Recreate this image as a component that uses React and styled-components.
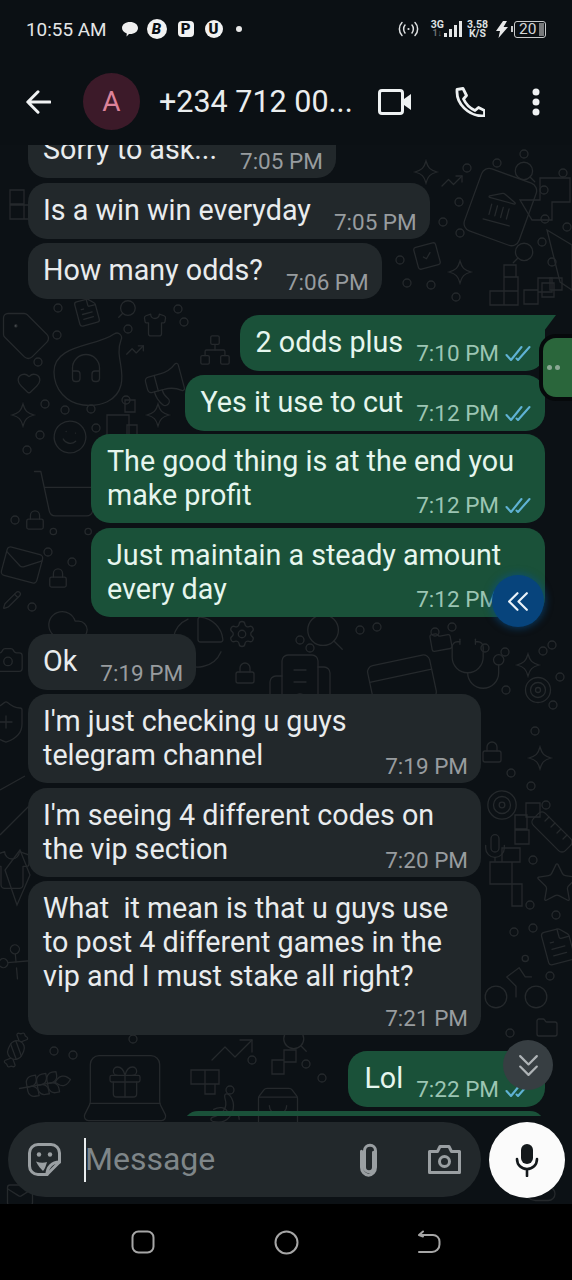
import React from "react";
import styled, { createGlobalStyle } from "styled-components";
import {
  Landmark, SquareCheck, Search, Tag, Headphones, Megaphone, Heart, Smile, ShoppingCart, Lock, Mail,
  Network, Cloud, Shirt, FileText, ChartPie, Settings, Building2, CreditCard, Stethoscope, Target, Ruler,
  Mic, Star, Bike, Folder, ShieldPlus, Scissors, Gift, Laptop, TrendingUp, ShoppingBag, Banana, Candy,
  Pencil, Camera, Wheat,
} from "lucide-react";

const Global = createGlobalStyle`
  html, body { margin: 0; padding: 0; background: #000; }
  * { box-sizing: border-box; }
`;

const Page = styled.div`
  width: 572px; height: 1280px; display: flex; flex-direction: column; overflow: hidden;
  font-family: Roboto, "Noto Sans", sans-serif; background: #0b1014; color: #e9edef;
`;
const Header = styled.header`
  height: 145px; flex: none; background: #0b1014; display: flex; flex-direction: column;
`;
const StatusBar = styled.div`
  height: 58px; display: flex; align-items: center; justify-content: space-between; padding: 0 26px;
`;
const StatusGroup = styled.div`display: flex; align-items: center; margin-left: ${p => p.$ml || 0}px;`;
const Clock = styled.span`font-size: 18.9px; color: #e4e6e7; margin-right: 14px;`;
const NoteBadge = styled.span`
  width: ${p => p.$size || 20}px; height: ${p => p.$size || 20}px; border-radius: ${p => p.$square ? "4px" : "50%"};
  background: #f2f2f2; color: #0b1014; display: flex; align-items: center; justify-content: center;
  font-size: 15px; font-weight: 900; font-style: ${p => p.$italic ? "italic" : "normal"};
  margin-left: ${p => p.$ml || 0}px;
`;
const NoteDot = styled.span`width: 6px; height: 6px; border-radius: 50%; background: #e8e8e8; margin-left: 13px;`;
const NetStack = styled.span`
  display: flex; flex-direction: column; align-items: center; line-height: 9px; font-size: 10.5px; font-weight: 700; color: #dfe1e2;
  margin-left: ${p => p.$ml || 0}px;
`;
const NetDim = styled.span`color: #6c7072; font-size: 9px;`;
const Battery = styled.span`
  width: 32px; height: 17px; border: 1.5px solid #c9cbcc; border-radius: 3px; margin-left: 6px; position: relative;
  display: flex; align-items: center; padding-left: 4px; font-size: 15.5px; color: #d4d6d7;
  &::before { content: ""; position: absolute; left: -4px; top: 4px; width: 2px; height: 6px; background: #c9cbcc; }
  &::after { content: ""; position: absolute; right: 1px; top: 1px; bottom: 1px; width: 5px; background: #77797b; }
`;
const AppBar = styled.div`height: 87px; display: flex; align-items: center; padding: 0 0 0 26px;`;
const IconSlot = styled.span`
  display: flex; align-items: center; justify-content: center; flex: none;
  width: ${p => p.$w}px; margin-left: ${p => p.$ml || 0}px; color: #eef1f2;
`;
const Avatar = styled.div`
  width: 57px; height: 57px; border-radius: 50%; background: #3c1a29; color: #dc8299; flex: none; margin-left: 32px;
  display: flex; align-items: center; justify-content: center; font-size: 28px;
`;
const Title = styled.div`font-size: 30.5px; color: #eaedee; margin-left: 19px; width: 194px; white-space: nowrap;`;

const Chat = styled.main`
  flex: 1; min-height: 0; position: relative; display: flex; flex-direction: column; background: #0c1115;
`;
const Wallpaper = styled.svg`position: absolute; inset: 0; width: 100%; height: 100%;`;
const Messages = styled.section`
  position: relative; flex: 1; min-height: 0; overflow: hidden; display: flex; flex-direction: column;
`;
const Bubble = styled.div`
  flex: none; position: relative;
  align-self: ${p => p.$out ? "flex-end" : "flex-start"};
  margin: ${p => p.$top}px ${p => p.$out ? "27px" : "0"} 0 ${p => p.$out ? "0" : "28px"};
  width: ${p => p.$width ? p.$width + "px" : "auto"};
  background: ${p => p.$out ? "#1a5139" : "#22282b"};
  color: ${p => p.$out ? "#e6f6ee" : "#e9ecee"};
  border-radius: 19px;
  border-top-right-radius: ${p => p.$tail ? "0" : "19px"};
  padding: 10px ${p => p.$out ? "14px" : "13px"} 0 ${p => p.$out ? "16px" : "15px"};
  ${p => p.$tail && `&::after { content: ""; position: absolute; top: 0; right: -11px; width: 12px; height: 16px; background: #1a5139; clip-path: polygon(0 0, 100% 0, 0 100%); }`}
`;
const InlineRow = styled.div`display: flex; align-items: flex-end; gap: ${p => p.$out ? 13 : 23}px; height: 46px;`;
const Text = styled.div`font-size: 28.7px; line-height: 34px;`;
const Line = styled.div`width: fit-content; white-space: pre;`;
const InlineText = styled(Text)`white-space: nowrap; padding-bottom: 12px;`;
const Meta = styled.div`
  display: flex; align-items: center; justify-content: flex-end; gap: 6px; height: 24px; flex: none; width: fit-content;
  margin: ${p => p.$mt || 0}px 0 ${p => p.$out ? 6 : 5}px auto;
  font-size: 22.5px; color: ${p => p.$out ? "#9cc5b3" : "#989c9f"}; white-space: nowrap;
`;
const PeekBubble = styled.div`
  flex: none; align-self: flex-end; width: 362px; height: 30px; margin: 4px 27px 0 0; background: #1a5139; border-radius: 19px;
`;
const SwipeTab = styled.div`
  position: absolute; right: -14px; top: 193px; width: 43px; height: 59px; background: #2a663b; border-radius: 13px;
  box-shadow: 0 0 0 4px #06090b; display: flex; align-items: center; gap: 3px; padding-left: 4px;
`;
const SwipeDot = styled.span`width: 5px; height: 5px; border-radius: 50%; background: #8aa894;`;
const Fab = styled.div`
  position: absolute; border-radius: 50%; display: flex; align-items: center; justify-content: center;
  left: ${p => p.$x}px; top: ${p => p.$y}px; width: ${p => p.$d}px; height: ${p => p.$d}px;
  background: ${p => p.$bg}; box-shadow: ${p => p.$glow || "none"};
`;
const ComposerRow = styled.div`
  position: relative; flex: none; height: 88px; padding: 6px 7px 7px 8px; display: flex; gap: 8px;
`;
const Composer = styled.div`
  flex: 1; height: 75px; border-radius: 38px; background: #22282b; display: flex; align-items: center; padding: 0 20px; color: #9a9fa2;
`;
const Caret = styled.span`width: 2px; height: 44px; background: #e9edef; margin-left: 23px; flex: none;`;
const Placeholder = styled.span`font-size: 32px; color: #7f8689; flex: 1; margin-top: -2px; margin-left: -1px;`;
const MicButton = styled.div`
  width: 76px; height: 76px; border-radius: 50%; background: #fbfbfb; flex: none; display: flex; align-items: center; justify-content: center;
`;
const NavBar = styled.nav`
  height: 76px; flex: none; background: #000; display: grid; grid-template-columns: repeat(3, 143px);
  justify-content: center; justify-items: center; align-items: center;
`;

const Ticks = () => (
  <svg width="26" height="17" viewBox="0 0 26 17" fill="none" stroke="#5fb2d4" strokeWidth="2.1" strokeLinecap="round" strokeLinejoin="round">
    <path d="M1.5 10l4.5 5L16.5 2" /><path d="M11.5 13.5l1.5 1.5L24.5 2" />
  </svg>
);
const Msg = ({ out, top, lines, time, width, mt, tail, ticks = out }) => {
  const meta = (
    <Meta $out={out} $mt={mt}>
      <span>{time}</span>{ticks && <Ticks />}
    </Meta>
  );
  return (
    <Bubble $out={out} $top={top} $width={width} $tail={tail}>
      {width
        ? <><Text>{lines.map((l, i) => <Line key={i}>{l}</Line>)}</Text>{meta}</>
        : <InlineRow $out={out}><InlineText>{lines[0]}</InlineText>{meta}</InlineRow>}
    </Bubble>
  );
};

const STAR = "M0 -11C2 -4 4 -2 11 0C4 2 2 4 0 11C-2 4 -4 2 -11 0C-4 -2 -2 -4 0 -11Z";
const doodles = [
  [Landmark, 500, 208, 36, 15], [SquareCheck, 427, 256, 30, -15], [Search, 525, 172, 26, 0], [Search, 523, 253, 26, 90],
  [TrendingUp, 452, 181, 24, 0], [Tag, 26, 336, 54, 0], [Headphones, 86, 368, 36, 0], [Megaphone, 165, 385, 48, -15],
  [Heart, 29, 383, 26, 0], [Smile, 70, 437, 38, 10], [ShoppingCart, 66, 503, 76, 0], [Lock, 35, 520, 22, 0], [Lock, 58, 578, 22, 0],
  [Mail, 22, 565, 44, 15], [Network, 215, 350, 34, 0], [Cloud, 68, 625, 46, 0], [Shirt, 155, 325, 26, 0], [FileText, 87, 312, 30, -15],
  [Search, 127, 309, 22, 90], [TrendingUp, 135, 350, 20, 0], [ChartPie, 198, 642, 60, 0], [Settings, 242, 634, 30, 0], [Search, 325, 632, 46, 0],
  [Building2, 300, 682, 72, 0], [Lock, 245, 673, 24, 0], [CreditCard, 402, 682, 76, -12], [Stethoscope, 478, 665, 62, 0], [Target, 538, 690, 30, 0],
  [Lock, 492, 752, 24, 0], [Target, 502, 805, 34, 0], [Ruler, 552, 832, 48, 0], [Mic, 495, 848, 32, 0], [Star, 557, 883, 46, 0],
  [FileText, 558, 946, 40, -15], [Bike, 516, 980, 74, 0], [Folder, 547, 1028, 24, 0], [ShieldPlus, 6, 722, 48, 0],
  [Scissors, 16, 962, 36, 40], [Gift, 125, 1082, 40, 0], [Laptop, 125, 1086, 104, 0], [Candy, 16, 1050, 36, -20], [Wheat, 45, 1084, 44, 35],
  [TrendingUp, 232, 1050, 48, 0], [ShoppingBag, 278, 1110, 52, 0], [Banana, 225, 1108, 34, 0], [Pencil, 12, 600, 20, 0],
  [Camera, 8, 660, 34, 0], [Search, 295, 1040, 30, 0], [Shirt, 12, 870, 44, 0], [Folder, 441, 642, 24, -10],
  [Cloud, 540, 1190, 36, 0], [Mail, 20, 1195, 30, 0],
];
const stars = [[426, 172], [460, 272], [23, 415], [158, 415], [528, 665], [540, 758]];
const blocks = [
  "M490 291h14v14h-14zM504 291h14v14h-14zM504 277h14v14h-14zM504 265h12v12h-12z", "M542 283h12v14h-12zM550 278h12v12h-12z",
  "M524 290h14v14h-14zM538 278h14v14h-14z", "M520 200h20v-22h30v24h-18v18h-20z", "M107 415h22v22h-22zM125 400h10v12h-10zM127 425h10v12h-10z",
  "M10 205h14v14h-14zM10 190h14v14h-14zM24 205h14v14h-14z", "M515 815h12v14h-12zM526 803h14v14h-14zM515 830h14v14h-14z",
  "M490 862h22v22h-22zM512 862h-10v-14h18v14zM512 884h10v22h-10z", "M191 1070h14v14h-14zM205 1084h10v10h-10zM205 1070h14v14h-14z",
  "M272 1060h12v14h-12zM284 1050h12v12h-12z",
];
const circles = [
  [467, 168], [497, 163], [524, 154], [563, 173], [544, 190], [459, 202], [443, 222], [460, 233], [545, 219], [542, 242], [567, 227], [552, 262],
  [400, 260], [407, 283], [431, 285], [456, 297], [58, 308], [57, 335], [178, 309], [128, 329], [184, 322], [38, 362], [126, 400], [45, 404], [65, 410], [91, 409], [96, 428], [40, 435],
  [27, 450], [15, 520], [48, 552], [72, 562], [32, 607], [300, 640], [310, 648], [377, 627], [360, 630], [435, 632], [452, 627], [485, 648], [543, 651], [505, 652], [552, 645], [560, 677], [506, 690],
  [535, 731], [553, 705], [511, 773], [531, 786], [546, 805], [533, 860], [530, 905], [556, 915], [514, 932], [533, 928], [550, 976], [510, 1033], [54, 1051], [73, 1055], [133, 1039], [230, 1090], [322, 1078], [252, 1060], [306, 1064],
];

const Doodles = () => (
  <Wallpaper viewBox="0 145 572 1059" aria-hidden="true" fill="none" stroke="#25292c" strokeWidth="1.3">
    {doodles.map(([Icon, x, y, s, r], i) => (
      <g key={i} transform={`translate(${x} ${y}) rotate(${r})`}>
        <Icon x={-s / 2} y={-s / 2} size={s} color="#25292c" absoluteStrokeWidth strokeWidth={1.3} />
      </g>
    ))}
    <rect x="471" y="174" width="58" height="66" rx="8" transform="rotate(20 500 208)" />
    <path d="M54 372c0-28 42-25 60-38 5-3 9 2 7 6-6 16 4 28 0 45-4 16-20 22-38 20-16-2-29-15-29-33z" />
    {stars.map(([x, y], i) => <path key={i} d={STAR} transform={`translate(${x} ${y})`} />)}
    {blocks.map((d, i) => <path key={i} d={d} />)}
    {circles.map(([x, y], i) => <circle key={i} cx={x} cy={y} r="4" />)}
    <path d="M547 230l25 15v45l-12-8z" />
    <path d="M20 850l-15 20 12 35 13-30zM0 835l30-30M0 790l25-14" />
  </Wallpaper>
);

const BubbleChat = () => (
  <svg width="18" height="16" viewBox="0 0 18 16" fill="#efefef"><path d="M9 1c4.6 0 8 2.6 8 6s-3.4 6-8 6H8l-2.500 2.400.3-3C3 11.500 1 9.500 1 7c0-3.400 3.400-6 8-6z" /></svg>
);
const Broadcast = () => (
  <svg width="21" height="16" viewBox="0 0 21 16" fill="none" stroke="#dfe1e2" strokeWidth="1.5" strokeLinecap="round">
    <path d="M4 1.500c-3.500 3.500-3.500 9.500 0 13M7 4c-1.800 2.200-1.800 5.800 0 8M17 1.500c3.500 3.500 3.500 9.500 0 13M14 4c1.800 2.200 1.800 5.800 0 8" />
    <circle cx="10.500" cy="8" r="1.100" fill="#dfe1e2" stroke="none" />
  </svg>
);
const Signal = () => (
  <svg width="18" height="18" viewBox="0 0 18 18" fill="#e4e6e7">
    <rect x="0" y="13" width="3" height="4" /><rect x="5" y="9" width="3" height="8" /><rect x="10" y="5" width="3" height="12" /><rect x="15" y="1" width="3" height="16" />
  </svg>
);
const Bolt = () => (
  <svg width="12" height="17" viewBox="0 0 12 17" fill="#e8e9ea"><path d="M7 0L0 10h4l-1.500 7L12 6H7.500L11 0z" /></svg>
);
const BackArrow = () => (
  <svg width="25" height="24" viewBox="0 0 25 24" fill="none" stroke="#f0f2f3" strokeWidth="3" strokeLinecap="round" strokeLinejoin="round"><path d="M24 12H2M12 1.800L1.800 12 12 22.200" /></svg>
);
const VideoIcon = () => (
  <svg width="33" height="26" viewBox="0 0 33 26" fill="none"><rect x="1.500" y="1.500" width="23" height="23" rx="2.500" stroke="#eef1f2" strokeWidth="3" /><path d="M26 10l7-5v16l-7-5z" fill="#eef1f2" /></svg>
);
const PhoneIcon = () => (
  <svg width="30" height="30" viewBox="0 0 30 30" fill="none" stroke="#eef1f2" strokeWidth="2.800" strokeLinejoin="round" strokeLinecap="round">
    <path d="M2 2.500l6-1 3.500 7-3 3.500c2.500 5.500 6 9 11.500 11.500l3.500-3 6 3v5.500h-3C13 28 2 17 2 5z" />
  </svg>
);
const DotsIcon = () => (
  <svg width="8" height="28" viewBox="0 0 8 28" fill="#f0f2f3"><circle cx="4" cy="4" r="3.500" /><circle cx="4" cy="14" r="3.500" /><circle cx="4" cy="24" r="3.500" /></svg>
);
const StickerIcon = () => (
  <svg width="33" height="33" viewBox="0 0 33 33" fill="none" stroke="#9a9fa2" strokeWidth="3" strokeLinecap="round" strokeLinejoin="round">
    <path d="M19 31.500H10A8.500 8.500 0 0 1 1.500 23V10A8.500 8.500 0 0 1 10 1.500h13A8.500 8.500 0 0 1 31.500 10v9z" />
    <path d="M19 31.500c0-7 5-12.500 12.500-12.500" />
    <circle cx="11" cy="11.500" r="2.200" fill="#9a9fa2" stroke="none" /><circle cx="22" cy="11.500" r="2.200" fill="#9a9fa2" stroke="none" />
    <path d="M8 18.500c4 1.500 8 1.500 11 .5-1 3-2 7-4 9-2-2-5-5-7-9.500z" fill="#9a9fa2" stroke="none" />
  </svg>
);
const ClipIcon = () => (
  <svg width="21" height="34" viewBox="0 0 21 34" fill="none" stroke="#9a9fa2" strokeWidth="3" strokeLinecap="round">
    <path d="M15 9v15a4.500 4.500 0 0 1-9 0V7.500a5.500 5.500 0 0 1 11 0V24a7 8 0 0 1-14 0V8" transform="translate(.5 .2)" />
  </svg>
);
const CameraIcon = () => (
  <svg width="33" height="29" viewBox="0 0 33 29" fill="none" stroke="#9a9fa2" strokeWidth="3" strokeLinejoin="round">
    <path d="M1.500 6.500h8l2.500-5h9l2.500 5h8v21h-30z" /><circle cx="16.500" cy="16.500" r="5" />
  </svg>
);
const MicIcon = () => (
  <svg width="24" height="34" viewBox="0 0 24 34" fill="none"><rect x="6" y="1" width="12" height="20" rx="6" fill="#14191c" /><path d="M2 16c0 6 4.500 10 10 10s10-4 10-10M12 26v7" stroke="#14191c" strokeWidth="2.600" strokeLinecap="round" /></svg>
);
const Chevrons = ({ dir, color, size }) => (
  <svg width={size} height={size} viewBox="0 0 24 24" fill="none" stroke={color} strokeWidth="2.100" strokeLinecap="round" strokeLinejoin="round">
    {dir === "left" ? <path d="M11 4l-8 8 8 8M20 4l-8 8 8 8" /> : <path d="M4 3l8 8 8-8M4 13l8 8 8-8" />}
  </svg>
);

const messages = [
  { top: -23, lines: ["Sorry to ask..."], time: "7:05 PM" },
  { top: 5, lines: ["Is a win win everyday"], time: "7:05 PM" },
  { top: 4, lines: ["How many odds?"], time: "7:06 PM" },
  { out: true, tail: true, top: 16, lines: ["2 odds plus"], time: "7:10 PM" },
  { out: true, top: 4, lines: ["Yes it use to cut"], time: "7:12 PM" },
  { out: true, top: 3, width: 454, mt: -19, lines: ["The good thing is at the end you", "make profit"], time: "7:12 PM" },
  { out: true, top: 5, width: 454, mt: -19, lines: ["Just maintain a steady amount", "every day"], time: "7:12 PM" },
  { top: 17, lines: ["Ok"], time: "7:19 PM" },
  { top: 4, width: 453, mt: -18, lines: ["I'm just checking u guys", "telegram channel"], time: "7:19 PM" },
  { top: 5, width: 453, mt: -18, lines: ["I'm seeing 4 different codes on", "the vip section"], time: "7:20 PM" },
  { top: 4, width: 453, mt: 13, lines: ["What  it mean is that u guys use", "to post 4 different games in the", "vip and I must stake all right?"], time: "7:21 PM" },
  { out: true, top: 16, lines: ["Lol"], time: "7:22 PM" },
];

export default function App() {
  return (
    <Page>
      <Global />
      <Header>
        <StatusBar>
          <StatusGroup>
            <Clock>10:55 AM</Clock>
            <BubbleChat />
            <NoteBadge $ml={8} $italic>B</NoteBadge>
            <NoteBadge $ml={11} $size={16} $square>P</NoteBadge>
            <NoteBadge $ml={11} $size={18}>U</NoteBadge>
            <NoteDot />
          </StatusGroup>
          <StatusGroup>
            <Broadcast />
            <NetStack $ml={12}>3G<NetDim>1↓</NetDim></NetStack>
            <Signal />
            <NetStack $ml={5}>3.58<span>K/S</span></NetStack>
            <StatusGroup $ml={8}><Bolt /></StatusGroup>
            <Battery>20</Battery>
          </StatusGroup>
        </StatusBar>
        <AppBar>
          <BackArrow />
          <Avatar>A</Avatar>
          <Title>+234 712 00...</Title>
          <IconSlot $w={33} $ml={25}><VideoIcon /></IconSlot>
          <IconSlot $w={30} $ml={44}><PhoneIcon /></IconSlot>
          <IconSlot $w={8} $ml={47}><DotsIcon /></IconSlot>
        </AppBar>
      </Header>
      <Chat>
        <Doodles />
        <Messages>
          {messages.map((m, i) => <Msg key={i} {...m} />)}
          <PeekBubble />
        </Messages>
        <SwipeTab><SwipeDot /><SwipeDot /></SwipeTab>
        <Fab $x={492} $y={430} $d={52} $bg="#07447c" $glow="0 0 7px 2px rgba(8,80,140,.55)"><Chevrons dir="left" color="#eaf2f8" size={25} /></Fab>
        <Fab $x={503} $y={895} $d={50} $bg="#373e42"><Chevrons dir="down" color="#aeb3b6" size={25} /></Fab>
        <ComposerRow>
          <Composer>
            <StickerIcon />
            <Caret />
            <Placeholder>Message</Placeholder>
            <IconSlot $w={21}><ClipIcon /></IconSlot>
            <IconSlot $w={33} $ml={49}><CameraIcon /></IconSlot>
          </Composer>
          <MicButton><MicIcon /></MicButton>
        </ComposerRow>
      </Chat>
      <NavBar>
        <svg width="24" height="24" viewBox="0 0 24 24" fill="none" stroke="#a6a6a6" strokeWidth="2"><rect x="1.500" y="1.500" width="21" height="21" rx="6" /></svg>
        <svg width="25" height="25" viewBox="0 0 25 25" fill="none" stroke="#a6a6a6" strokeWidth="2"><circle cx="12.500" cy="12.500" r="11" /></svg>
        <svg width="24" height="24" viewBox="0 0 24 24" fill="none" stroke="#a6a6a6" strokeWidth="2" strokeLinecap="round" strokeLinejoin="round"><path d="M6 1.500L2 5l4 1.500M2 5h14a6.500 6.500 0 0 1 6.500 6.500v3A7.500 7.500 0 0 1 15 22H2" /></svg>
      </NavBar>
    </Page>
  );
}
